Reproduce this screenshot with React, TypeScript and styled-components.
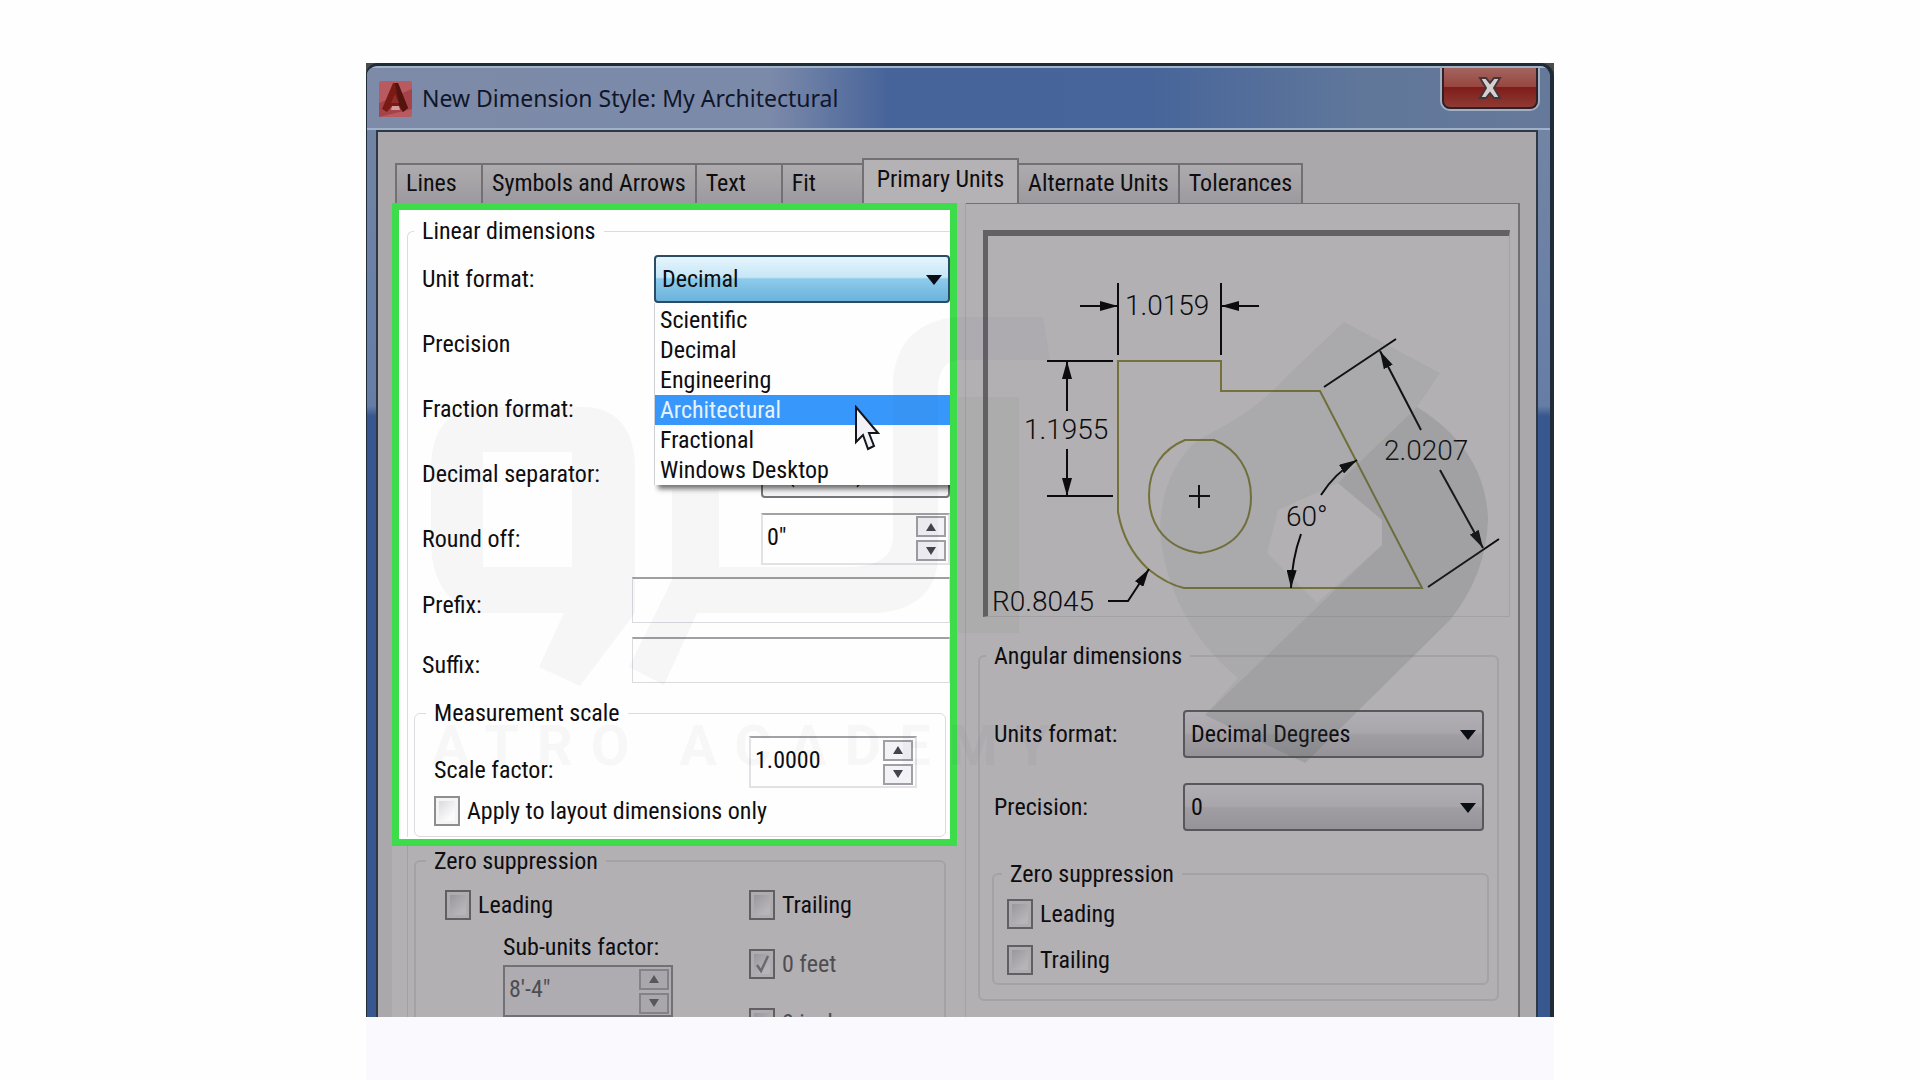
import React, { useId } from "react";
import styled, { createGlobalStyle, css } from "styled-components";

const GlobalStyle = createGlobalStyle`
  *, *::before, *::after { box-sizing: border-box; }
  body {
    margin: 0;
    background: #fefefe;
    color: #0e0d10;
    font: 24px/30px "Roboto Condensed", "Liberation Sans", sans-serif;
  }
  button, input, select { font: inherit; color: inherit; margin: 0; }
`;

const Page = styled.div`
  display: flex;
  flex-direction: column;
  align-items: center;
  height: 100vh;
  padding-top: 63px;
  overflow: hidden;
`;

const Backdrop = styled.div`
  display: flex;
  flex: 1 1 0;
  min-height: 0;
  width: 100%;
  max-width: 1188px;
  background: linear-gradient(to bottom, #4a4c4e 0, #4a4c4e 40px, #1f2b37 41px);
`;

const Window = styled.main`
  position: relative;
  display: flex;
  flex-direction: column;
  flex: 1 1 0;
  min-width: 0;
  min-height: 0;
  overflow: hidden;
  border: solid #1f2b37;
  border-width: 3px 4px 0 1px;
  border-radius: 12px 14px 0 0;
  background: linear-gradient(to bottom, #7486a4 0, #667da6 340px, #38578e 350px);
`;

const Footer = styled.footer`
  flex: none;
  width: 100%;
  max-width: 1188px;
  height: 63px;
  background: #faf9fd;
`;

const TitleBar = styled.header`
  display: flex;
  align-items: flex-start;
  flex: none;
  height: 64px;
  padding: 0 12px;
  border-top: 2px solid #a3b3c6;
  border-bottom: 2px solid #9db1cb;
  background: linear-gradient(to right, #7d8ba8 0, #7c8aaa 34%, #47649a 44%, #47659a 66%, #60779a 84%, #66799a 100%);
`;

const AppIcon = styled.svg`
  flex: none;
  width: 33px;
  height: 36px;
  margin-top: 13px;
`;

const Title = styled.h1`
  flex: 1;
  margin: 0 0 0 10px;
  color: #10162a;
  font: 400 23px/60px "Noto Sans", "Open Sans", sans-serif;
`;

const CloseButton = styled.button`
  display: grid;
  place-items: center;
  flex: none;
  width: 96px;
  height: 41px;
  padding: 0;
  border: 2px solid #30202a;
  border-top: 0;
  border-radius: 0 0 8px 8px;
  box-shadow: 0 0 0 2px #a3b0c2;
  background: linear-gradient(to bottom, #a3645f 0, #98463f 48%, #7e1d19 50%, #8f3a33 100%);
`;

const Client = styled.section`
  display: flex;
  flex-direction: column;
  flex: 1;
  min-height: 0;
  margin: 0 12px 0 9px;
  padding: 26px 16px 0 14px;
  border: 2px solid #2d3844;
  border-bottom: 0;
  background: #aaa8ab;
`;

const TabList = styled.div`
  display: flex;
  align-items: flex-end;
  flex: none;
  height: 45px;
  padding-left: 3px;
`;

const Tab = styled.button<{ $active?: boolean }>`
  height: 40px;
  min-width: 86px;
  padding: 0 9px 2px;
  border: 2px solid #727074;
  border-width: 2px 0 0 2px;
  background: linear-gradient(to bottom, #adabae, #9c9a9e);
  text-align: left;
  white-space: nowrap;
  &:last-child { border-right-width: 2px; }
  ${(p) =>
    p.$active &&
    css`
      height: 46px;
      margin: 0 0 -1px -5px;
      padding: 0 13px 7px;
      border-right-width: 2px;
      background: #b4b2b5;
      & + button { border-left-width: 0; }
    `}
`;

const Pane = styled.div`
  display: grid;
  grid-template-columns: 574fr 554fr;
  flex: 1;
  min-height: 0;
  background: #b2b0b3;
`;

const LeftColumn = styled.div`
  display: flex;
  flex-direction: column;
  min-width: 0;
  border-right: 1px solid #a3a1a5;
`;

const Highlight = styled.section`
  margin-right: 8px;
  padding: 6px 0 2px 8px;
  border: 7px solid #3cdc4a;
  background: #fefefe;
`;

const Group = styled.fieldset<{ $tone?: "light" }>`
  min-width: 0;
  margin: 0;
  padding: 0;
  border: ${(p) => (p.$tone ? "1px solid #dddbe0" : "2px solid #a4a2a6")};
  border-radius: 6px;
`;

const Legend = styled.legend`
  padding: 0 8px;
  line-height: 30px;
`;

const LinearGroup = styled(Group)`
  padding-left: 6px;
  border-right: 0;
  border-bottom: 0;
  border-radius: 6px 0 0 0;
`;

const MeasurementGroup = styled(Group)`
  margin: 7px 4px 0 0;
  padding: 0 0 10px 11px;
`;

const Row = styled.div<{ $height: number; $right?: number }>`
  position: relative;
  display: flex;
  align-items: center;
  justify-content: space-between;
  height: ${(p) => p.$height}px;
  padding: 0 ${(p) => p.$right ?? 0}px 0 8px;
`;

const BaseRow = styled(Row)`
  align-items: flex-end;
  padding-bottom: 8px;
  & > label { line-height: 36px; }
`;

const LinearTail = styled.div`
  flex: 1;
  margin-left: 15px;
  padding: 0 19px 0 6px;
  border-left: 1px solid #a3a1a5;
`;

const ZeroGroup = styled(Group)`
  height: 260px;
  padding-left: 10px;
`;

const ZeroGrid = styled.div`
  display: grid;
  grid-template-columns: 304px 1fr;
  padding: 14px 0 0 19px;
`;

const CheckStack = styled.div<{ $gap: number }>`
  display: flex;
  flex-direction: column;
  gap: ${(p) => p.$gap}px;
`;

const SubUnits = styled.div`
  display: flex;
  flex-direction: column;
  gap: 3px;
  margin-left: 58px;
`;

const CheckLabel = styled.label<{ $muted?: boolean }>`
  display: flex;
  align-items: center;
  gap: 7px;
  height: 30px;
  white-space: nowrap;
  color: ${(p) => (p.$muted ? "#4f4d52" : "inherit")};
`;

const CheckBox = styled.span`
  position: relative;
  display: grid;
  width: 26px;
  height: 30px;
`;

const CheckInput = styled.input<{ $tone?: "light" }>`
  appearance: none;
  width: 26px;
  height: 30px;
  border: 2px solid ${(p) => (p.$tone ? "#8e8d90" : "#625f64")};
  background: ${(p) =>
    p.$tone ? "linear-gradient(135deg, #d3d4d8, #fbfbfc 70%)" : "linear-gradient(135deg, #939195, #b6b4b8 70%)"};
  box-shadow: inset 0 0 0 3px ${(p) => (p.$tone ? "#f4f4f5" : "#aeacaf")};
`;

const Tick = styled.svg`
  position: absolute;
  inset: 5px 4px;
  width: 18px;
  height: 20px;
  pointer-events: none;
`;

const SelectBox = styled.div<{ $width: number }>`
  position: relative;
  flex: none;
  width: ${(p) => p.$width}px;
`;

const selectTones = {
  hot: css`
    border-color: #2a4c66;
    background: linear-gradient(to bottom, #e6f5fd 0, #c6e6f6 46%, #8dcbea 50%, #6cb2dc 100%);
  `,
  light: css`
    border-color: #767478;
    background: #f4f3f5;
  `,
  dim: css`
    border-color: #59575b;
    background: linear-gradient(to bottom, #b1afb3 0, #a8a6aa 48%, #a09ea2 52%, #959397 100%);
  `,
};

const SelectInput = styled.select<{ $tone: keyof typeof selectTones }>`
  appearance: none;
  display: block;
  width: 100%;
  height: 48px;
  padding: 0 32px 0 6px;
  border: 2px solid;
  border-radius: 4px;
  ${(p) => selectTones[p.$tone]}
`;

const Arrow = styled.svg`
  position: absolute;
  top: 20px;
  right: 8px;
  width: 16px;
  height: 10px;
  pointer-events: none;
`;

const OptionList = styled.ul`
  position: absolute;
  z-index: 2;
  top: 100%;
  left: 0;
  right: 0;
  margin: 0;
  padding: 2px 0 0;
  border-left: 1px solid #d0cfd4;
  background: #fefefe;
  box-shadow: 4px 4px 5px rgba(0, 0, 0, 0.55);
  clip-path: inset(0 0 -14px 0);
  list-style: none;
`;

const Option = styled.li<{ $selected?: boolean }>`
  padding-left: 5px;
  line-height: 30px;
  color: ${(p) => (p.$selected ? "#e4f2ff" : "inherit")};
  background: ${(p) => (p.$selected ? "#3897fb" : "transparent")};
`;

const Pointer = styled.svg`
  position: absolute;
  z-index: 3;
  top: 150px;
  left: 200px;
  width: 26px;
  height: 46px;
`;

const TextInput = styled.input`
  width: 318px;
  height: 46px;
  padding: 0 6px;
  border: 1px solid #dcdadf;
  border-top: 2px solid #a19fa3;
  background: #fefefe;
`;

const SpinFrame = styled.div<{ $width: number; $tone?: "light" }>`
  display: flex;
  align-items: center;
  flex: none;
  width: ${(p) => p.$width}px;
  height: 52px;
  padding: 0 2px 0 4px;
  border: 2px solid ${(p) => (p.$tone ? "#e3e1e6" : "#727074")};
  border-top-color: ${(p) => (p.$tone ? "#a3a1a5" : "#727074")};
  background: ${(p) => (p.$tone ? "#fefefe" : "#aeacb0")};
`;

const SpinInput = styled.input`
  flex: 1;
  min-width: 0;
  height: 44px;
  padding: 0 0 4px;
  border: 0;
  background: transparent;
  &:disabled { color: #4f4d52; }
`;

const SpinButtons = styled.div`
  display: grid;
  gap: 3px;
`;

const SpinButton = styled.button<{ $tone?: "light" }>`
  display: grid;
  place-items: center;
  width: 30px;
  height: 21px;
  padding: 0;
  border: 2px solid ${(p) => (p.$tone ? "#a19fa4" : "#848286")};
  background: ${(p) => (p.$tone ? "#f3f2f6" : "#a9a7ab")};
  color: ${(p) => (p.$tone ? "#45434e" : "#58565b")};
`;

const RightColumn = styled.div`
  min-width: 0;
  padding: 26px 8px 0 12px;
  border-top: 1px solid #727074;
  border-right: 2px solid #727074;
`;

const Preview = styled.div`
  height: 387px;
  margin-left: 5px;
  border-style: solid;
  border-width: 6px 1px 1px 5px;
  border-color: #636166 #a3a1a5 #a3a1a5 #636166;
`;

const Drawing = styled.svg`
  display: block;
  width: 100%;
  height: 100%;
  font-family: "Roboto", "Liberation Sans", sans-serif;
  font-size: 28px;
  font-weight: 300;
`;

const AngularGroup = styled(Group)`
  margin: 24px 11px 0 0;
  padding: 0 8px 14px 6px;
`;

const AngularRows = styled.div`
  padding-top: 26px;
`;

const AngularZero = styled(Group)`
  margin: 16px 0 0 6px;
  padding: 0 0 8px 8px;
`;

const AngularChecks = styled(CheckStack)`
  padding: 10px 0 0 5px;
`;

const Watermark = styled.svg`
  position: absolute;
  z-index: 4;
  top: 234px;
  left: 51px;
  width: 1080px;
  height: 480px;
  pointer-events: none;
`;

function CheckField({ label, tone, checked, disabled }: { label: string; tone?: "light"; checked?: boolean; disabled?: boolean }) {
  return (
    <CheckLabel $muted={disabled}>
      <CheckBox>
        <CheckInput type="checkbox" $tone={tone} defaultChecked={checked} disabled={disabled} />
        {checked && (
          <Tick viewBox="0 0 18 20" fill="none" stroke="#6b696e" strokeWidth="2.5">
            <path d="M4 11l4 6 7-15" />
          </Tick>
        )}
      </CheckBox>
      {label}
    </CheckLabel>
  );
}

function SpinField({ id, value, width, tone, disabled }: { id: string; value: string; width: number; tone?: "light"; disabled?: boolean }) {
  return (
    <SpinFrame $width={width} $tone={tone}>
      <SpinInput id={id} defaultValue={value} disabled={disabled} />
      <SpinButtons>
        <SpinButton $tone={tone} aria-label="Increase" disabled={disabled}>
          <svg width="10" height="8" viewBox="0 0 10 8"><path d="M5 0l5 8H0z" fill="currentColor" /></svg>
        </SpinButton>
        <SpinButton $tone={tone} aria-label="Decrease" disabled={disabled}>
          <svg width="10" height="8" viewBox="0 0 10 8"><path d="M0 0h10L5 8z" fill="currentColor" /></svg>
        </SpinButton>
      </SpinButtons>
    </SpinFrame>
  );
}

function SelectField({ id, value, width, tone, children }: { id: string; value: string; width: number; tone: keyof typeof selectTones; children?: React.ReactNode }) {
  return (
    <SelectBox $width={width}>
      <SelectInput id={id} $tone={tone} defaultValue={value}>
        <option>{value}</option>
      </SelectInput>
      <Arrow viewBox="0 0 16 10"><path d="M0 0h16L8 10z" fill="#0b0d14" /></Arrow>
      {children}
    </SelectBox>
  );
}

const tabs = ["Lines", "Symbols and Arrows", "Text", "Fit", "Primary Units", "Alternate Units", "Tolerances"];
const formats = ["Scientific", "Decimal", "Engineering", "Architectural", "Fractional", "Windows Desktop"];

function PartDrawing() {
  return (
    <Drawing viewBox="988 236 521 380" preserveAspectRatio="xMinYMin meet" role="img" aria-label="Dimension preview">
      <defs>
        <marker id="tip" viewBox="0 0 18 10" refX="18" refY="5" markerWidth="18" markerHeight="10" markerUnits="userSpaceOnUse" orient="auto-start-reverse">
          <path d="M0 0l18 5-18 5z" fill="#0c0c0e" />
        </marker>
      </defs>
      <g fill="none" stroke="#74713a" strokeWidth="2">
        <path d="M1118 361H1221V391H1320L1422 588H1184C1170 585 1158 577 1148 569C1133 555 1122 535 1118 512Z" />
        <path d="M1185 440H1214C1237 449 1251 470 1251 497C1251 530 1231 549 1200 553C1169 549 1149 528 1149 495C1149 468 1163 449 1185 440Z" />
      </g>
      <g fill="none" stroke="#0c0c0e" strokeWidth="2">
        <path d="M1118 283v72M1221 283v72M1047 361h66M1047 496h66M1324 387l72-48M1428 587l71-48M1189 496h21M1199 485v23" />
        <path d="M1080 306h38" markerEnd="url(#tip)" />
        <path d="M1259 306h-38" markerEnd="url(#tip)" />
        <path d="M1067 411v-50" markerEnd="url(#tip)" />
        <path d="M1067 449v47" markerEnd="url(#tip)" />
        <path d="M1421 430l-41-79" markerEnd="url(#tip)" />
        <path d="M1440 470l43 78" markerEnd="url(#tip)" />
        <path d="M1321 495q14-22 36-35" markerEnd="url(#tip)" />
        <path d="M1301 534q-9 25-10 54" markerEnd="url(#tip)" />
        <path d="M1108 601h20l21-32" markerEnd="url(#tip)" />
      </g>
      <g fill="#0c0c0e">
        <text x="1125" y="315">1.0159</text>
        <text x="1024" y="439">1.1955</text>
        <text x="1384" y="460">2.0207</text>
        <text x="1286" y="526">60°</text>
        <text x="992" y="611">R0.8045</text>
      </g>
    </Drawing>
  );
}

export default function App() {
  const id = useId();
  return (
    <>
      <GlobalStyle />
      <Page>
        <Backdrop>
          <Window>
            <TitleBar>
              <AppIcon viewBox="0 0 33 36">
                <rect width="33" height="36" rx="2" fill="#b85a60" />
                <path d="M0 36V22L33 8v20z" fill="#a5434a" />
                <path d="M14 2h5l10 25-5 4-4-5h-8l-4 5-5-3z" fill="#7a1a14" />
                <path d="M16 2h3l10 25-5 4-4-7z" fill="#531410" />
                <path d="M16 13l-4 9h8z" fill="#8f2d27" />
                <path d="M13 25h7l1 4h-9z" fill="#d29c9d" />
              </AppIcon>
              <Title>New Dimension Style: My Architectural</Title>
              <CloseButton aria-label="Close">
                <svg width="24" height="22" viewBox="0 0 24 22">
                  <path d="M2 1h6l4 5 4-5h6l-6 10 6 10h-6l-4-5-4 5H2l6-10z" fill="#d5cfd0" stroke="#43353a" strokeWidth="2" />
                </svg>
              </CloseButton>
            </TitleBar>
            <Client>
              <TabList role="tablist">
                {tabs.map((name) => (
                  <Tab key={name} role="tab" aria-selected={name === "Primary Units"} $active={name === "Primary Units"}>
                    {name}
                  </Tab>
                ))}
              </TabList>
              <Pane>
                <LeftColumn>
                  <Highlight>
                    <LinearGroup $tone="light">
                      <Legend>Linear dimensions</Legend>
                      <Row $height={65}>
                        <label htmlFor={`${id}unit`}>Unit format:</label>
                        <SelectField id={`${id}unit`} value="Decimal" width={296} tone="hot">
                          <OptionList role="listbox" aria-label="Unit format">
                            {formats.map((name) => (
                              <Option key={name} role="option" aria-selected={name === "Architectural"} $selected={name === "Architectural"}>
                                {name}
                              </Option>
                            ))}
                          </OptionList>
                          <Pointer viewBox="0 0 26 46">
                            <path d="M2 2v35l7-7 5 14 6-3-5-13h9z" fill="#f1f1f6" stroke="#15161d" strokeWidth="2" />
                          </Pointer>
                        </SelectField>
                      </Row>
                      <Row $height={65}>Precision</Row>
                      <Row $height={65}>Fraction format:</Row>
                      <Row $height={65}>
                        <label htmlFor={`${id}sep`}>Decimal separator:</label>
                        <SelectField id={`${id}sep`} value="'.' (Period)" width={189} tone="light" />
                      </Row>
                      <Row $height={65}>
                        <label htmlFor={`${id}round`}>Round off:</label>
                        <SpinField id={`${id}round`} value={'0"'} width={189} tone="light" />
                      </Row>
                      <BaseRow $height={60}>
                        <label htmlFor={`${id}prefix`}>Prefix:</label>
                        <TextInput id={`${id}prefix`} />
                      </BaseRow>
                      <BaseRow $height={60}>
                        <label htmlFor={`${id}suffix`}>Suffix:</label>
                        <TextInput id={`${id}suffix`} />
                      </BaseRow>
                      <MeasurementGroup $tone="light">
                        <Legend>Measurement scale</Legend>
                        <BaseRow $height={68} $right={28}>
                          <label htmlFor={`${id}scale`}>Scale factor:</label>
                          <SpinField id={`${id}scale`} value="1.0000" width={168} tone="light" />
                        </BaseRow>
                        <Row $height={30}>
                          <CheckField label="Apply to layout dimensions only" tone="light" />
                        </Row>
                      </MeasurementGroup>
                    </LinearGroup>
                  </Highlight>
                  <LinearTail>
                    <ZeroGroup>
                      <Legend>Zero suppression</Legend>
                      <ZeroGrid>
                        <CheckStack $gap={12}>
                          <CheckField label="Leading" />
                          <SubUnits>
                            <label htmlFor={`${id}sub`}>Sub-units factor:</label>
                            <SpinField id={`${id}sub`} value={"8'-4\""} width={170} disabled />
                          </SubUnits>
                        </CheckStack>
                        <CheckStack $gap={29}>
                          <CheckField label="Trailing" />
                          <CheckField label="0 feet" checked disabled />
                          <CheckField label="0 inches" disabled />
                        </CheckStack>
                      </ZeroGrid>
                    </ZeroGroup>
                  </LinearTail>
                </LeftColumn>
                <RightColumn>
                  <Preview>
                    <PartDrawing />
                  </Preview>
                  <AngularGroup>
                    <Legend>Angular dimensions</Legend>
                    <AngularRows>
                      <Row $height={73} $right={5}>
                        <label htmlFor={`${id}aunit`}>Units format:</label>
                        <SelectField id={`${id}aunit`} value="Decimal Degrees" width={301} tone="dim" />
                      </Row>
                      <Row $height={73} $right={5}>
                        <label htmlFor={`${id}aprec`}>Precision:</label>
                        <SelectField id={`${id}aprec`} value="0" width={301} tone="dim" />
                      </Row>
                    </AngularRows>
                    <AngularZero>
                      <Legend>Zero suppression</Legend>
                      <AngularChecks $gap={16}>
                        <CheckField label="Leading" />
                        <CheckField label="Trailing" />
                      </AngularChecks>
                    </AngularZero>
                  </AngularGroup>
                </RightColumn>
              </Pane>
            </Client>
            <Watermark viewBox="420 300 1080 480" aria-hidden="true">
              <g fill="#3c3c58" fillOpacity="0.04" fillRule="evenodd">
                <path d="M480 407H590Q637 412 637 470V613L582 686L541 667L566 613H480Q433 600 433 540V470Q433 412 480 407ZM485 452V567H574V452Z" />
                <path d="M674 490H721V567H850Q892 567 895 540V380Q900 322 960 317H1045L1052 360H960Q942 362 940 385V560Q936 608 880 613H699L666 685L631 667L674 580Z" />
              </g>
              <path d="M960 397H1021V633H960Z" fill="#505a58" fillOpacity="0.05" />
              <g fill="#4a5656" fillRule="evenodd">
                <path fillOpacity="0.08" d="M1346 322L1442 373L1419 407Q1488 450 1490 520Q1488 575 1452 620L1368 703L1307 763L1207 715L1240 678Q1170 620 1162 530Q1164 470 1200 440Q1260 410 1288 377ZM1340 483L1384 520V545L1319 603L1269 553L1280 510Z" />
                <path fillOpacity="0.09" d="M1419 407Q1488 450 1490 520Q1488 575 1452 620L1368 703L1307 763L1207 715L1384 545V520L1340 483Z" />
              </g>
              <text x="434" y="765" fill="#3c3c58" fillOpacity="0.035" fontFamily="Roboto, sans-serif" fontWeight="700" fontSize="56" letterSpacing="18">
                ATRO ACADEMY
              </text>
            </Watermark>
          </Window>
        </Backdrop>
        <Footer />
      </Page>
    </>
  );
}
